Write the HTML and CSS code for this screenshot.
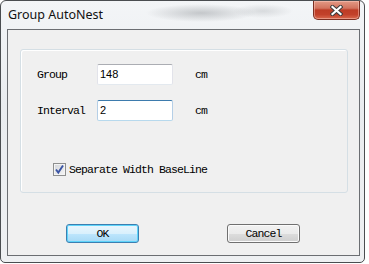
FILE: index.html
```html
<!DOCTYPE html>
<html>
<head>
<meta charset="utf-8">
<link rel="stylesheet" href="styles.css">
</head>
<body>
<div class="window">
  <div class="titlebar">
    <span class="title">Group AutoNest</span>
    <div class="close">
      <svg width="13" height="11" viewBox="0 0 13 11">
        <path d="M2.5 2 L10.5 9 M10.5 2 L2.5 9" stroke="#3b3b3b" stroke-width="4.2" stroke-linecap="square"/>
        <path d="M2.5 2 L10.5 9 M10.5 2 L2.5 9" stroke="#ffffff" stroke-width="2.2" stroke-linecap="square"/>
      </svg>
    </div>
  </div>
  <div class="client">
    <div class="groupbox">
      <div class="row">
        <span class="lbl">Group</span>
        <div class="edit">148</div>
        <span class="unit">cm</span>
      </div>
      <div class="row">
        <span class="lbl">Interval</span>
        <div class="edit focus">2</div>
        <span class="unit">cm</span>
      </div>
      <div class="check">
        <span class="box">
          <svg width="11" height="11" viewBox="0 0 11 11">
            <path d="M2 5.5 L4.3 8.5 L9 1.5" fill="none" stroke="#3a54a4" stroke-width="1.9"/>
          </svg>
        </span>
        <span class="check-text">Separate Width BaseLine</span>
      </div>
    </div>
    <div class="buttons">
      <div class="btn default">OK</div>
      <div class="btn">Cancel</div>
    </div>
  </div>
</div>
</body>
</html>
```
FILE: styles.css
```css
html, body {
  margin: 0;
  padding: 0;
  background: #ffffff;
}
body {
  width: 369px;
  height: 264px;
  overflow: hidden;
}
.window {
  box-sizing: border-box;
  width: 365px;
  height: 263px;
  border: 1px solid #4a4d50;
  border-radius: 6px 6px 5px 5px;
  padding: 0 4px 6px 6px;
  display: flex;
  flex-direction: column;
  background:
    radial-gradient(ellipse 55px 9px at 200px 12px, rgba(110,115,120,0.35), rgba(110,115,120,0) ),
    radial-gradient(ellipse 30px 7px at 262px 10px, rgba(120,125,130,0.22), rgba(120,125,130,0) ),
    linear-gradient(#f3f5f7, #e9ecef 40%, #eef0f2);
}
.titlebar {
  height: 28px;
  display: flex;
  justify-content: space-between;
  align-items: flex-start;
}
.title {
  font-family: "Noto Sans", sans-serif;
  font-size: 12.5px;
  line-height: 16px;
  color: #111;
  margin-top: 6px;
  padding-left: 1px;
}
.close {
  box-sizing: border-box;
  width: 47px;
  height: 19px;
  margin-top: 0;
  border: 1px solid #7b2f22;
  border-top: none;
  border-radius: 0 0 5px 5px;
  background: linear-gradient(#e39a86 0%, #d2735e 40%, #bd3c25 50%, #c2412a 75%, #d9694e 100%);
  box-shadow: inset 0 0 0 1px rgba(255,210,200,0.45);
  display: flex;
  align-items: center;
  justify-content: center;
}
.close svg { display: block; }
.client {
  flex: 1;
  border: 1px solid #6b6e72;
  background: #f0f0f0;
  padding: 19px 11px 0 12px;
  display: flex;
  flex-direction: column;
}
.groupbox {
  box-sizing: border-box;
  height: 144px;
  border: 1px solid #d5dfe5;
  border-radius: 3px;
  box-shadow: inset 1px 1px 0 #ffffff;
  padding: 14px 0 0 16px;
  display: flex;
  flex-direction: column;
}
.row {
  display: flex;
  align-items: center;
  height: 21px;
  margin-bottom: 15px;
}
.lbl, .unit, .check-text, .btn {
  font-family: "Liberation Mono", monospace;
  font-size: 11.5px;
  letter-spacing: -0.9px;
  color: #000;
}
.lbl {
  width: 60px;
}
.edit {
  box-sizing: border-box;
  width: 76px;
  height: 21px;
  background: #fff;
  border: 1px solid #e2e3ea;
  border-top-color: #abadb3;
  border-bottom-color: #e3e9ef;
  border-radius: 2px;
  font-family: "Liberation Sans", sans-serif;
  font-size: 11px;
  line-height: 19px;
  padding-left: 2px;
  color: #000;
}
.edit.focus {
  border-color: #b5cfe7;
  border-top-color: #3d7bad;
  border-bottom-color: #b7d9ed;
}
.unit {
  margin-left: 22px;
}
.check {
  display: flex;
  align-items: center;
  margin-top: 27px;
  margin-left: 16px;
}
.box {
  box-sizing: border-box;
  width: 13px;
  height: 13px;
  border: 1px solid #8e8f8f;
  background: linear-gradient(135deg, #d2d5da, #f6f6f6);
  box-shadow: inset 0 0 0 1px #f4f4f4;
  display: flex;
  align-items: center;
  justify-content: center;
}
.box svg { display: block; }
.check-text {
  margin-left: 3px;
}
.buttons {
  display: flex;
  margin-top: 31px;
  margin-left: 46px;
  gap: 88px;
}
.btn {
  box-sizing: border-box;
  width: 73px;
  height: 19px;
  border: 1px solid #707070;
  border-radius: 3px;
  background: linear-gradient(#f2f2f2 0%, #ebebeb 50%, #dddddd 50%, #cfcfcf 100%);
  box-shadow: inset 0 0 0 1px #fbfbfb;
  text-align: center;
  line-height: 17px;
}
.btn.default {
  border-color: #3c7fb1;
  background: linear-gradient(#eaf6fd 0%, #d9f0fc 50%, #bee6fd 50%, #a7d9f5 100%);
  box-shadow: inset 0 0 0 1px #5fd4fa;
}
```
